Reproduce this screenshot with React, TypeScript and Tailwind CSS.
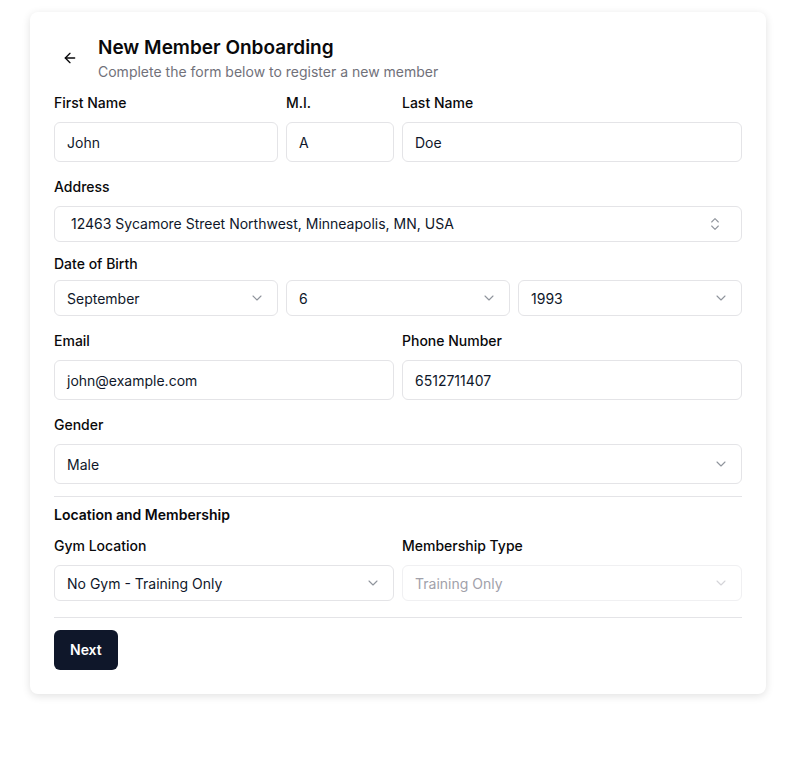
import { ArrowLeft, ChevronDown, ChevronsUpDown } from 'lucide-react';

const inputBox =
  'flex items-center w-full rounded-md border border-[#e4e4e7] bg-white px-3 text-sm text-[#0f172a]';

function Label({ children }: { children: React.ReactNode }) {
  return <div className="text-sm font-medium leading-5 text-[#09090b]">{children}</div>;
}

function TextField({ label, value, gap = 'mt-[9px]' }: { label: string; value: string; gap?: string }) {
  return (
    <div className="flex flex-col">
      <Label>{label}</Label>
      <div className={`${inputBox} ${gap} h-10 pt-[2px]`}>{value}</div>
    </div>
  );
}

function SelectBox({
  value,
  height = 'h-9',
  disabled = false,
}: {
  value: string;
  height?: string;
  disabled?: boolean;
}) {
  return (
    <div
      className={`flex items-center justify-between w-full rounded-md border bg-white px-3 text-sm ${height} ${
        disabled ? 'border-[#f0f0f2] text-[#a1a1aa]' : 'border-[#e4e4e7] text-[#0f172a]'
      }`}
    >
      <span className="pt-px">{value}</span>
      <ChevronDown size={16} strokeWidth={1.6} className={disabled ? 'text-[#d4d4d8]' : 'text-[#8f949c]'} />
    </div>
  );
}

export default function App() {
  return (
    <div className="min-h-[768px] bg-white" style={{ fontFamily: 'Inter, "Noto Sans", sans-serif' }}>
      <div className="pt-3">
        <div className="ml-[30px] w-[736px] rounded-lg bg-white shadow-[0_2px_8px_rgba(0,0,0,0.12)] px-6 pt-[22px] pb-6">
          {/* header */}
          <div className="flex items-center gap-3">
            <button className="flex h-8 w-8 items-center justify-center text-[#09090b]">
              <ArrowLeft size={16} strokeWidth={2} />
            </button>
            <div className="flex flex-col">
              <h1 className="text-[19px] font-semibold leading-7 text-[#09090b]">New Member Onboarding</h1>
              <p className="text-sm leading-5 text-[#71717a]">Complete the form below to register a new member</p>
            </div>
          </div>

          {/* name row */}
          <div className="mt-[11px] flex gap-2">
            <div className="w-[224px]">
              <TextField label="First Name" value="John" />
            </div>
            <div className="w-[108px]">
              <TextField label="M.I." value="A" />
            </div>
            <div className="w-[340px]">
              <TextField label="Last Name" value="Doe" />
            </div>
          </div>

          {/* address */}
          <div className="mt-[15px]">
            <Label>Address</Label>
            <div className="mt-[9px] flex h-9 items-center justify-between rounded-md border border-[#e4e4e7] bg-white pl-4 pr-[18px] text-sm text-[#0f172a]">
              <span>12463 Sycamore Street Northwest, Minneapolis, MN, USA</span>
              <ChevronsUpDown size={16} strokeWidth={1.6} className="text-[#8f949c]" />
            </div>
          </div>

          {/* dob */}
          <div className="mt-3">
            <Label>Date of Birth</Label>
            <div className="mt-[6px] grid grid-cols-3 gap-2">
              <SelectBox value="September" />
              <SelectBox value="6" />
              <SelectBox value="1993" />
            </div>
          </div>

          {/* contact */}
          <div className="mt-[15px] grid grid-cols-2 gap-2">
            <TextField label="Email" value="john@example.com" />
            <TextField label="Phone Number" value="6512711407" />
          </div>

          {/* gender */}
          <div className="mt-[15px]">
            <Label>Gender</Label>
            <div className="mt-[9px]">
              <SelectBox value="Male" height="h-10" />
            </div>
          </div>

          <div className="mt-3 border-t border-[#e4e4e7]" />

          <div className="mt-[8px] text-sm font-semibold leading-5 text-[#09090b]">Location and Membership</div>

          <div className="mt-[11px] grid grid-cols-2 gap-2">
            <div>
              <Label>Gym Location</Label>
              <div className="mt-[9px]">
                <SelectBox value="No Gym - Training Only" />
              </div>
            </div>
            <div>
              <Label>Membership Type</Label>
              <div className="mt-[9px]">
                <SelectBox value="Training Only" disabled />
              </div>
            </div>
          </div>

          <div className="mt-4 border-t border-[#e4e4e7]" />

          <button className="mt-[12px] h-10 rounded-md bg-[#0f172a] px-4 text-sm font-semibold text-white">
            Next
          </button>
        </div>
      </div>
    </div>
  );
}
